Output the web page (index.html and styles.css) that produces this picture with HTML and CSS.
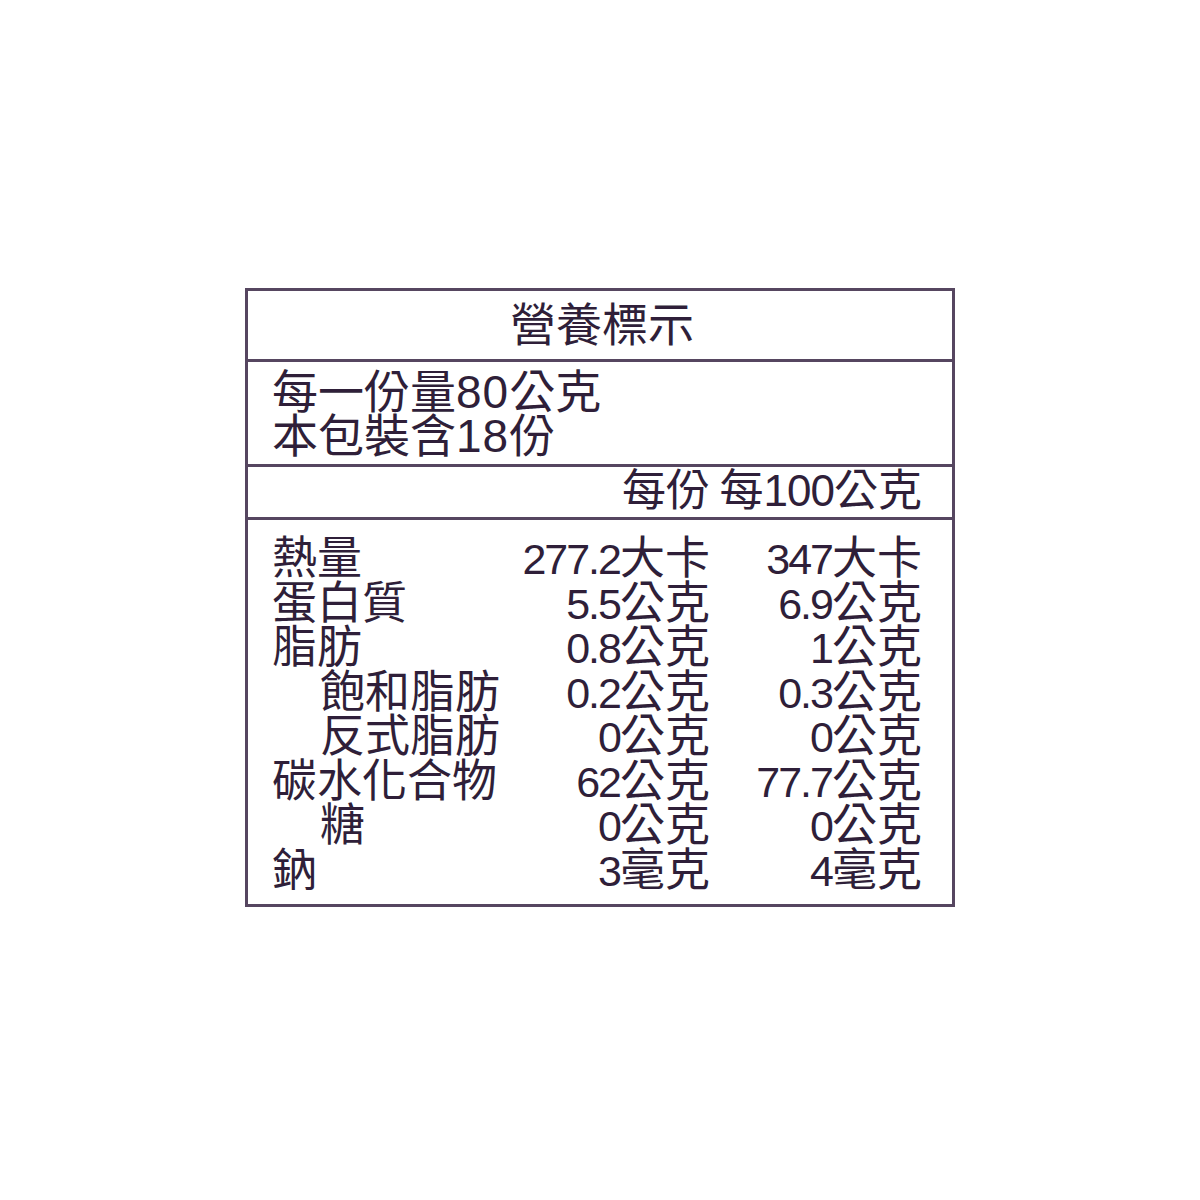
FILE: index.html
```
<!DOCTYPE html>
<html lang="zh-Hant">
<head>
<meta charset="utf-8">
<title>營養標示</title>
<link rel="stylesheet" href="styles.css">
</head>
<body>
<div class="label">
  <div class="title">營養標示</div>
  <div class="serving">
    <div>每一份量<span class="sn">80</span>公克</div>
    <div>本包裝含<span class="sn">18</span>份</div>
  </div>
  <div class="grid head">
    <span></span>
    <span class="v">每份</span>
    <span class="v">每<span class="hn">100</span>公克</span>
  </div>
  <div class="grid rows">
    <span class="k">熱量</span><span class="v"><span class="n">277.2</span>大卡</span><span class="v"><span class="n">347</span>大卡</span>
    <span class="k">蛋白質</span><span class="v"><span class="n">5.5</span>公克</span><span class="v"><span class="n">6.9</span>公克</span>
    <span class="k">脂肪</span><span class="v"><span class="n">0.8</span>公克</span><span class="v"><span class="n">1</span>公克</span>
    <span class="k sub">飽和脂肪</span><span class="v"><span class="n">0.2</span>公克</span><span class="v"><span class="n">0.3</span>公克</span>
    <span class="k sub">反式脂肪</span><span class="v"><span class="n">0</span>公克</span><span class="v"><span class="n">0</span>公克</span>
    <span class="k">碳水化合物</span><span class="v"><span class="n">62</span>公克</span><span class="v"><span class="n">77.7</span>公克</span>
    <span class="k sub">糖</span><span class="v"><span class="n">0</span>公克</span><span class="v"><span class="n">0</span>公克</span>
    <span class="k">鈉</span><span class="v"><span class="n">3</span>毫克</span><span class="v"><span class="n">4</span>毫克</span>
  </div>
</div>
</body>
</html>
```
FILE: styles.css
```
html, body {
  margin: 0;
  padding: 0;
  background: #ffffff;
}

body {
  font-family: "Liberation Sans", "Noto Sans CJK TC", sans-serif;
  color: #2f1f39;
  font-size: 45px;
}

.label {
  margin: 288px 0 0 245px;
  width: 704px;
  border: 3px solid #564660;
}

.title {
  height: 68px;
  line-height: 68px;
  text-align: center;
  border-bottom: 3px solid #564660;
  padding-left: 4px;
  font-size: 46px;
}

.serving {
  height: 105px;
  box-sizing: border-box;
  padding: 8px 0 0 24px;
  line-height: 44px;
  border-bottom: 3px solid #564660;
  font-size: 46px;
}

.sn {
  letter-spacing: 1px;
}

.grid {
  display: grid;
  grid-template-columns: 238px 200px 212px;
  padding-left: 24px;
}

.head {
  height: 50px;
  line-height: 48px;
  border-bottom: 3px solid #564660;
  font-size: 44px;
}

.hn {
  letter-spacing: -1px;
}

.rows {
  padding-top: 17px;
  padding-bottom: 11px;
  line-height: 44.5px;
}

.k {
  white-space: nowrap;
}

.sub {
  padding-left: 48px;
}

.v {
  text-align: right;
  white-space: nowrap;
}

.n {
  font-size: 43px;
  letter-spacing: -2px;
}
```
